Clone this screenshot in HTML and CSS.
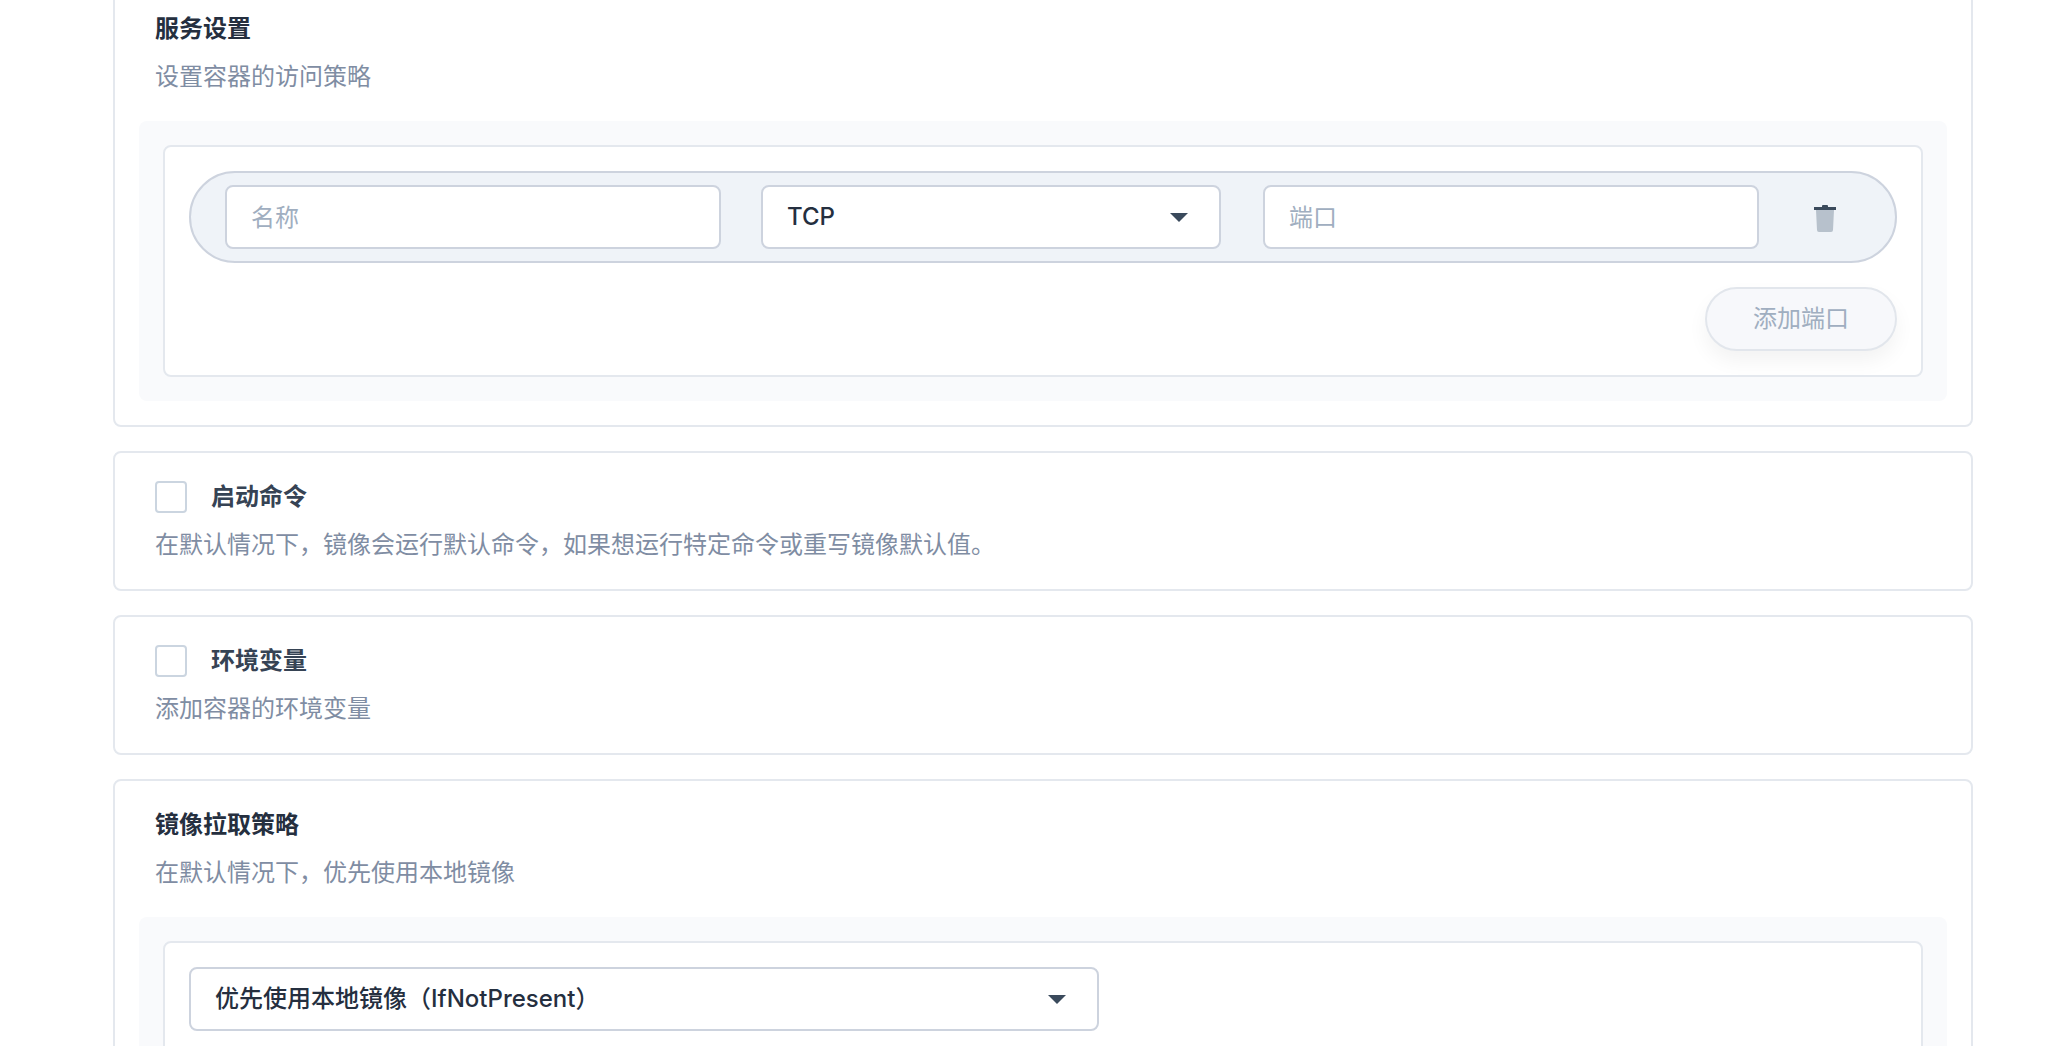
FILE: index.html
```html
<!DOCTYPE html>
<html lang="zh-CN">
<head>
    <meta charset="UTF-8">
    <meta name="viewport" content="width=device-width, initial-scale=1.0">
    <title>服务设置</title>
    <link rel="stylesheet" href="styles.css">
</head>
<body>
    <main class="form-list">
        <section class="card">
            <div class="card-header">
                <h3 class="card-title">服务设置</h3>
                <p class="card-desc">设置容器的访问策略</p>
            </div>
            <div class="panel">
                <div class="panel-inner">
                    <div class="port-row">
                        <input class="field" type="text" placeholder="名称">
                        <div class="select-wrap port-protocol">
                            <select class="select">
                                <option>TCP</option>
                                <option>UDP</option>
                            </select>
                        </div>
                        <input class="field" type="text" placeholder="端口">
                        <button class="icon-btn" type="button" aria-label="删除">
                            <svg width="22" height="28" viewBox="0 0 22 28">
                                <rect x="8" y="0" width="6" height="3" rx="1" fill="#3a4a5c"/>
                                <rect x="0" y="2" width="22" height="3" fill="#3a4a5c"/>
                                <path d="M2 5h18l-1 20a2 2 0 0 1-2 2H5a2 2 0 0 1-2-2z" fill="#b7c1cc"/>
                            </svg>
                        </button>
                    </div>
                    <div class="panel-actions">
                        <button class="add-btn" type="button">添加端口</button>
                    </div>
                </div>
            </div>
        </section>

        <section class="card">
            <div class="card-header">
                <label class="check-title">
                    <input class="checkbox" type="checkbox">
                    <span>启动命令</span>
                </label>
                <p class="card-desc">在默认情况下，镜像会运行默认命令，如果想运行特定命令或重写镜像默认值。</p>
            </div>
        </section>

        <section class="card">
            <div class="card-header">
                <label class="check-title">
                    <input class="checkbox" type="checkbox">
                    <span>环境变量</span>
                </label>
                <p class="card-desc">添加容器的环境变量</p>
            </div>
        </section>

        <section class="card">
            <div class="card-header">
                <h3 class="card-title">镜像拉取策略</h3>
                <p class="card-desc">在默认情况下，优先使用本地镜像</p>
            </div>
            <div class="panel">
                <div class="panel-inner">
                    <div class="select-wrap policy-select">
                        <select class="select select-strong">
                            <option>优先使用本地镜像（IfNotPresent）</option>
                            <option>总是拉取镜像（Always）</option>
                            <option>不拉取镜像（Never）</option>
                        </select>
                    </div>
                </div>
            </div>
        </section>
    </main>
</body>
</html>
```

FILE: styles.css
```css
html, body {
    height: 1046px;
    overflow: hidden;
}
body {
    margin: 0;
    background-color: #fff;
    font-family: Inter, "Noto Sans CJK SC", sans-serif;
    font-size: 24px;
    line-height: 32px;
    color: #2d3748;
}
.form-list {
    display: flex;
    flex-direction: column;
    gap: 24px;
    margin: -17px 77px 0 113px;
}
.card {
    border: 2px solid #e4e8ee;
    border-radius: 8px;
    padding: 28px 24px 24px;
    background-color: #fff;
}
.card-header {
    padding: 0 16px 4px;
}
.card-title {
    margin: 0;
    font-size: 24px;
    line-height: 32px;
    font-weight: 600;
    color: #252f3f;
}
.card-desc {
    margin: 16px 0 0;
    color: #7f8da3;
}
.check-title {
    display: flex;
    align-items: center;
    gap: 24px;
    font-weight: 600;
    color: #364354;
}
.checkbox {
    appearance: none;
    width: 32px;
    height: 32px;
    margin: 0;
    border: 2px solid #cbd5e0;
    border-radius: 4px;
    background-color: #fff;
}
.panel {
    margin-top: 24px;
    padding: 24px;
    background-color: #f9fafc;
    border-radius: 8px;
}
.panel-inner {
    border: 2px solid #e4e8ee;
    border-radius: 8px;
    padding: 24px;
    background-color: #fff;
}
.port-row {
    display: flex;
    align-items: center;
    height: 92px;
    box-sizing: border-box;
    padding-left: 34px;
    border: 2px solid #cdd3de;
    border-radius: 46px;
    background-color: #eff3f8;
}
.field,
.select {
    display: block;
    box-sizing: border-box;
    width: 100%;
    height: 64px;
    padding: 0 24px;
    border: 2px solid #cdd3de;
    border-radius: 8px;
    background-color: #fff;
    font: inherit;
    color: #252f3f;
    outline: none;
}
.field {
    flex: 1;
    min-width: 0;
}
.field::placeholder {
    color: #a0aec0;
    opacity: 1;
}
.select {
    appearance: none;
    font-weight: 500;
}
.select-wrap {
    position: relative;
}
.select-wrap::after {
    content: "";
    position: absolute;
    top: 28px;
    right: 33px;
    border-left: 9px solid transparent;
    border-right: 9px solid transparent;
    border-top: 9px solid #3a4a5c;
    pointer-events: none;
}
.port-protocol {
    flex: none;
    width: 460px;
    margin: 0 42px 0 40px;
}
.policy-select {
    width: 910px;
}
.icon-btn {
    flex: none;
    display: flex;
    justify-content: center;
    box-sizing: border-box;
    width: 136px;
    padding: 4px 4px 0 0;
    border: 0;
    background: none;
}
.panel-actions {
    display: flex;
    justify-content: flex-end;
    margin-top: 24px;
}
.add-btn {
    width: 192px;
    height: 64px;
    border: 2px solid #e2e6ec;
    border-radius: 32px;
    background-color: #f7f8fb;
    font: inherit;
    color: #a0aec0;
    box-shadow: 0 10px 20px rgba(0, 0, 0, 0.05);
}
```
